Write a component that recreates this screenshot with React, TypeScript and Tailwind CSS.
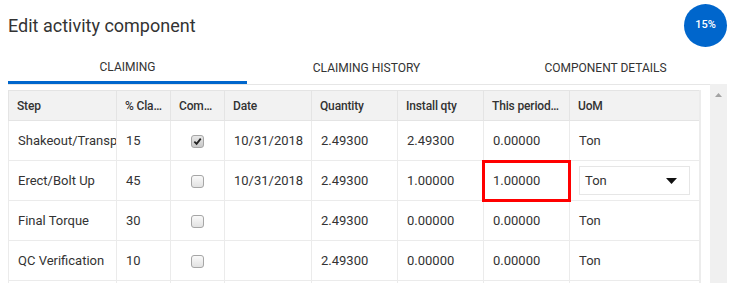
import React from 'react';

type Row = {
  step: string;
  pct: string;
  done: boolean;
  date: string;
  qty: string;
  install: string;
  period: string;
  editing?: boolean;
};

const rows: Row[] = [
  { step: 'Shakeout/Transport', pct: '15', done: true, date: '10/31/2018', qty: '2.49300', install: '2.49300', period: '0.00000' },
  { step: 'Erect/Bolt Up', pct: '45', done: false, date: '10/31/2018', qty: '2.49300', install: '1.00000', period: '1.00000', editing: true },
  { step: 'Final Torque', pct: '30', done: false, date: '', qty: '2.49300', install: '0.00000', period: '0.00000' },
  { step: 'QC Verification', pct: '10', done: false, date: '', qty: '2.49300', install: '0.00000', period: '0.00000' },
];

const tabs = ['Claiming', 'Claiming history', 'Component details'];

const Checkbox = ({ checked }: { checked: boolean }) => (
  <span
    className={`inline-flex items-center justify-center w-[13px] h-[13px] rounded-[3px] border border-[#a6a6a6] align-middle ${
      checked ? 'bg-gradient-to-b from-[#e8e8e8] to-[#c8c8c8]' : 'bg-gradient-to-b from-[#fafafa] to-[#e2e2e2]'
    }`}
  >
    {checked && (
      <svg width="9" height="9" viewBox="0 0 10 10">
        <path d="M1.5 5.2 L4 7.6 L8.6 1.8" fill="none" stroke="#222" strokeWidth="2" />
      </svg>
    )}
  </span>
);

export default function App() {
  const cell = 'h-10 px-[9px] border border-[#ebebeb] text-[13px] text-[#333] align-middle whitespace-nowrap overflow-hidden';
  const head = 'h-[30px] pl-[8px] pr-[8px] border border-[#e4e4e4] text-[12px] tracking-[-0.15px] font-medium text-[#333] text-left align-middle whitespace-nowrap overflow-hidden text-ellipsis';

  return (
    <div className="w-[731px] h-[283px] overflow-hidden bg-white font-['Roboto',sans-serif]">
      {/* title + progress */}
      <div className="flex items-start justify-between pl-2 pr-1 pt-1">
        <h1 className="mt-[10px] text-[18px] text-[#333] leading-6">Edit activity component</h1>
        <div className="w-[43px] h-[43px] rounded-full bg-[#0066cc] flex items-center justify-center text-white text-[11px] font-medium">
          15%
        </div>
      </div>

      {/* tabs */}
      <div className="flex ml-2 mr-[21px] mt-[3px] border-b border-[#e6e6e6]">
        {tabs.map((t, i) => (
          <div
            key={t}
            className={`w-[239px] shrink-0 h-[34px] flex items-center justify-center uppercase text-[12px] text-[#333] ${
              i === 0 ? 'border-b-[3px] border-[#0066cc] -mb-px pt-[3px]' : 'pt-px'
            }`}
          >
            {t}
          </div>
        ))}
      </div>

      {/* grid + scrollbar */}
      <div className="flex">
        <div className="pl-2 pt-[5px]">
          <table className="w-[691px] table-fixed border-collapse border-r-2 border-r-[#ececec]">
            <colgroup>
              <col className="w-[108px]" />
              <col className="w-[54px]" />
              <col className="w-[54px]" />
              <col className="w-[87px]" />
              <col className="w-[86px]" />
              <col className="w-[86px]" />
              <col className="w-[86px]" />
              <col className="w-[130px]" />
            </colgroup>
            <thead className="bg-[#f2f2f2]">
              <tr>
                <th className={head}>Step</th>
                <th className={head}>% Claimed</th>
                <th className={head}>Complete</th>
                <th className={head}>Date</th>
                <th className={head}>Quantity</th>
                <th className={head}>Install qty</th>
                <th className={head}>This period qty</th>
                <th className={head}>UoM</th>
              </tr>
            </thead>
            <tbody>
              {rows.map((r) => (
                <tr key={r.step}>
                  <td className={`${cell} text-clip`}>{r.step}</td>
                  <td className={cell}>{r.pct}</td>
                  <td className={`${cell} text-center`}>
                    <Checkbox checked={r.done} />
                  </td>
                  <td className={cell}>{r.date}</td>
                  <td className={cell}>{r.qty}</td>
                  <td className={cell}>{r.install}</td>
                  <td className={`${cell} relative overflow-visible`}>
                    {r.editing && (
                      <span className="absolute -left-[2px] -top-px -right-[2px] -bottom-[2px] border-[3px] border-[#ff0000]" />
                    )}
                    {r.period}
                  </td>
                  <td className={cell}>
                    {r.editing ? (
                      <div className="h-[29px] flex items-center justify-between border border-[#e6e6e6] pl-[5px] pr-[12px]">
                        <span>Ton</span>
                        <svg width="11" height="6" viewBox="0 0 11 6">
                          <path d="M0 0 H11 L5.5 6 Z" fill="#111" />
                        </svg>
                      </div>
                    ) : (
                      'Ton'
                    )}
                  </td>
                </tr>
              ))}
              <tr>
                {Array.from({ length: 8 }).map((_, i) => (
                  <td key={i} className={cell}></td>
                ))}
              </tr>
            </tbody>
          </table>
        </div>
        <div className="ml-auto mr-1 -mt-px w-[17px] h-[200px] bg-[#f0f0f0] flex justify-center pt-[9px]">
          <svg width="7" height="4" viewBox="0 0 7 4">
            <path d="M0 4 L3.5 0 L7 4 Z" fill="#a3a3a3" />
          </svg>
        </div>
      </div>
    </div>
  );
}
